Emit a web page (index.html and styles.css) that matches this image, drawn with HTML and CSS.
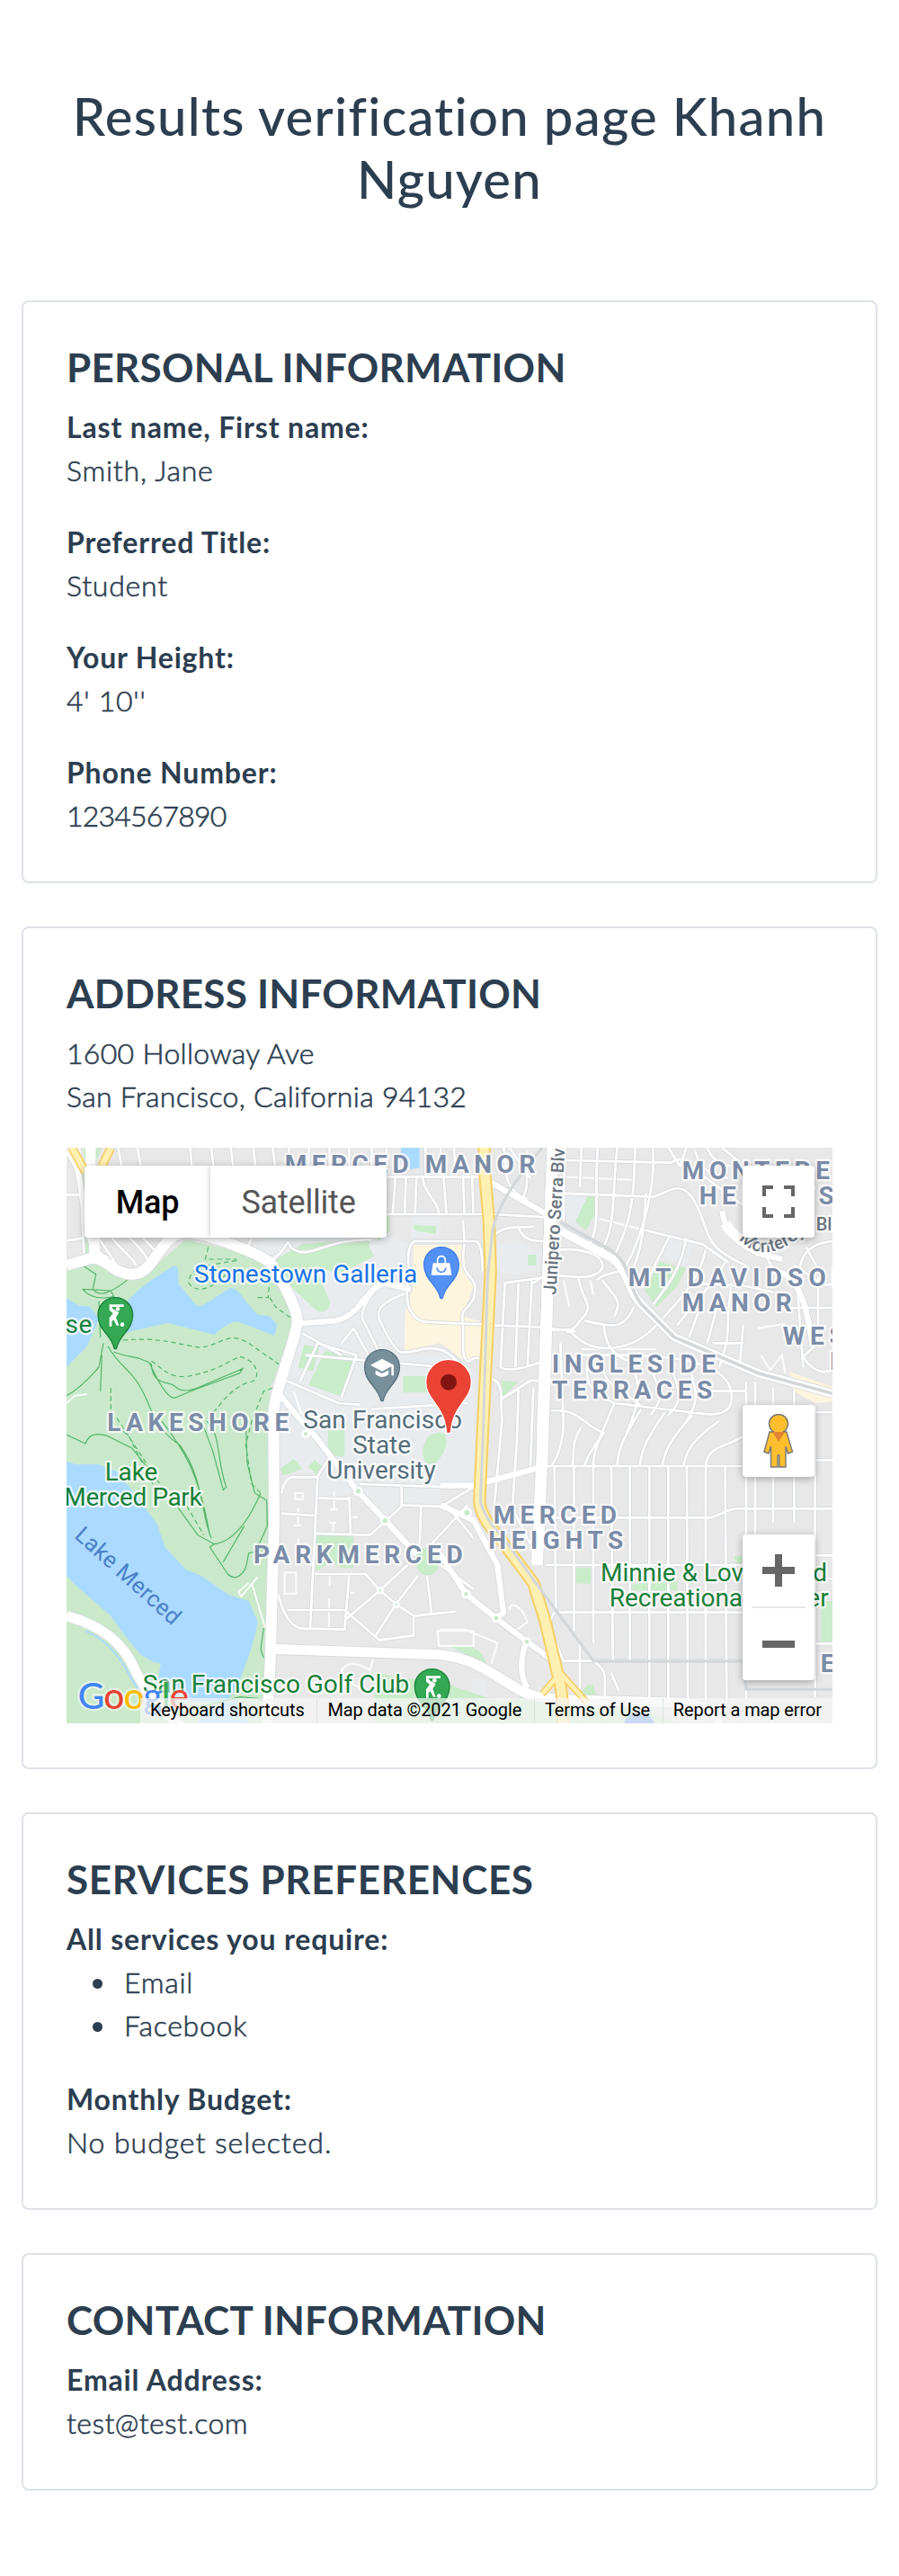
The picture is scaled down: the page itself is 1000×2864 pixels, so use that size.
FILE: index.html
```html
<!DOCTYPE html>
<html lang="en">
<head>
<meta charset="utf-8">
<title>Results verification page</title>
<link rel="stylesheet" href="styles.css">
</head>
<body>
<main class="page">
<h1 class="title">Results verification page Khanh Nguyen</h1>

<section class="card">
  <h2 class="card-title">PERSONAL INFORMATION</h2>
  <dl class="fields">
    <div class="field"><dt>Last name, First name:</dt><dd>Smith, Jane</dd></div>
    <div class="field"><dt>Preferred Title:</dt><dd>Student</dd></div>
    <div class="field"><dt>Your Height:</dt><dd>4' 10''</dd></div>
    <div class="field"><dt>Phone Number:</dt><dd class="digits">1234567890</dd></div>
  </dl>
</section>

<section class="card">
  <h2 class="card-title">ADDRESS INFORMATION</h2>
  <address class="address">1600 Holloway Ave<br>San Francisco, California 94132</address>
  <div class="map">
    <svg class="map-canvas" viewBox="42 48 2556 1920" width="852" height="640">
      <defs>
        <path id="minor" d="M85,48 L100,400 M42,205 H95 M42,358 L95,350 M215,48 L225,108 M278,48 L290,108 M455,48 L460,108 M525,48 L532,108 M590,48 L598,108 M665,48 L672,108 M730,48 L738,108 M150,350 L210,440 M180,330 C220,390 250,400 275,440 M230,330 C280,370 300,400 320,430 M280,330 L340,395 M1110,145 H1420 M1110,270 H1430 M1140,145 L1130,270 M1175,145 L1170,270 M1210,145 L1205,270 M1230,150 C1240,210 1280,220 1285,270 M1300,140 L1310,270 M1335,48 L1340,130 M1365,140 L1370,270 M1395,140 L1400,270 M785,48 V110 M850,48 V110 M920,48 V110 M985,48 V110 M1060,48 V110 M1110,48 V120 M1240,48 V140 M1290,48 V140 M640,390 L660,350 M720,430 C800,370 770,340 790,380 C850,430 900,350 1060,355
        M1365,290 L1370,360 M1200,360 H1410 Q1430,370 1430,460 M1370,370 C1350,480 1400,470 1405,510 C1410,590 1350,570 1365,630 M1200,362 C1170,390 1190,430 1180,510 C1170,580 1200,630 1250,630 L1430,637 M1170,535 C1050,580 1080,610 1110,670 C1150,730 1140,740 1210,725 C1290,700 1330,740 1365,780 M1365,640 V720 Q1370,780 1400,750 L1420,750
        M1460,640 L1600,645 L1740,660 M1460,270 L1650,280 M1500,48 C1520,100 1480,180 1580,220 M1580,60 C1570,140 1590,170 1565,215 M1520,48 L1590,150 M1470,340 C1510,300 1560,320 1600,310 M1550,310 C1560,360 1610,360 1640,360 M1600,500 C1640,470 1640,480 1660,475 M1500,500 L1640,480 M1505,500 L1490,780 Q1520,800 1620,765 M1550,500 L1540,780 M1595,490 L1580,780 M1460,820 C1500,830 1490,860 1495,960 L1470,1240 M1495,885 L1590,825 H1640 M1550,850 L1545,1020 L1530,1250 L1590,1370 M1460,1158 L1620,1110 M1600,850 L1590,1110
        M1700,90 L2060,98 Q2090,75 2110,100 L2300,240 M1690,200 L2000,212 C2060,190 2090,160 2130,215 C2170,270 2170,340 2210,380 C2280,440 2310,430 2320,455 M1705,48 L1700,300 M1760,48 L1755,180 M1815,48 C1800,200 1830,320 1780,380 M1880,48 C1860,200 1880,320 1820,400 M1940,48 L1935,160 C1925,300 1900,340 1870,410 M1998,48 C2010,160 1970,330 1910,440 M1975,200 C1970,320 1960,400 1920,480 M2050,48 L2090,110 L2110,48 M2140,60 C2160,130 2200,140 2250,150 M2180,48 Q2200,100 2260,110 M2230,48 L2280,90 M1980,325 L2165,370 L2250,430 M2055,340 C2030,400 2010,420 1980,500 M2110,350 C2090,460 2040,520 2000,570 M2175,390 C2150,500 2080,560 2030,620 M2240,430 L2210,480 L2080,640 M2260,500 L2250,600 C2250,700 2240,720 2220,780 M2130,500 L2310,510 L2400,530 M2160,570 L2120,680 M2210,590 L2180,700
        M1670,390 C1750,380 1840,400 1830,450 C1800,500 1700,470 1660,475 M1750,480 C1760,560 1810,570 1760,620 C1740,650 1700,680 1720,655 L1660,655 M1720,655 C1780,740 1920,740 2010,640 M1770,625 C1880,650 1900,650 1935,580 M1830,490 C1870,550 1900,550 1870,610 M1835,640 C1840,700 1860,740 1920,760 M1890,460 Q1830,470 1810,490 M1690,700 L1700,960 M1750,740 L1900,740 C2050,740 2240,760 2260,860 C2270,920 2240,945 2160,935 L1870,900 C1800,870 1770,840 1780,770 M1830,760 C1830,850 1900,850 1960,910 M1920,760 C1960,830 1960,890 1910,1000 M1990,770 C2010,850 2050,870 1990,940 M2060,770 C2080,860 2110,880 2050,940 M2120,780 C2150,870 2150,900 2110,960 M1660,925 C1760,920 1760,970 1835,1000 C1790,1060 1780,1080 1770,1110 M1700,960 Q1700,1050 1660,1110 M1760,980 C1720,1040 1740,1080 1730,1110 M1870,900 C1830,1000 1800,1050 1800,1110 M1960,920 C1910,1000 1880,1050 1880,1110 M2040,930 C1990,1000 1960,1050 1955,1110 M2130,940 C2060,1020 2040,1050 2030,1110 M2220,960 C2130,1020 2110,1060 2100,1110 M2300,1010 C2240,1050 2180,1040 2175,1110
        M2300,640 L2290,760 M2310,830 V1700 M2180,860 H2310 M2200,700 H2300 M2340,830 V1700 M2400,850 V1300 M2470,860 V1300 M2540,910 V1880 M2480,500 L2500,780 M2550,480 V640 M2440,582 H2598 M2410,480 C2400,440 2380,430 2370,390 M2598,360 C2500,370 2490,420 2480,500 M2470,440 C2540,480 2560,520 2598,500 M2510,380 L2560,470 M2500,745 L2560,690 M2500,745 Q2540,810 2598,790 M2540,930 H2598
        M1645,1110 H2310 M1640,1282 H2190 C2240,1270 2240,1250 2300,1252 H2598 M1640,1440 H2310 M1680,1598 H2310 M1700,1760 H2310 M1670,1110 L1675,1590 M1735,1110 V1660 M1800,1110 V1700 M1860,1110 L1865,1760 M1922,1110 V1760 M1987,1110 V1910 M2050,1110 V1910 M2112,1110 L2115,1910 M2175,1110 V1910 M2240,1110 L2245,1910 M2545,1090 H2598 M2540,1408 H2598 M2540,1485 H2598 M2540,1702 H2598 M1670,1598 C1640,1640 1670,1680 1700,1760 M1755,1700 V1960 M1800,1760 C1860,1800 1830,1820 1840,1960 M1860,1800 L1885,1860 M2310,1800 V1960
        M760,1200 Q770,1145 800,1147 L878,1147 L920,1080 M880,1147 L855,1650 M885,1217 L990,1220 M985,1210 L990,1335 M875,1335 L1055,1340 L1160,1245 M760,1268 L870,1275 M1020,1170 L1330,1180 M1160,1175 V1240 L1310,1245 M1225,1245 L1220,1370 M1310,1240 L1400,1350 M1400,1180 L1300,1240 M1380,1240 L1260,1370 M750,1540 C770,1640 820,1655 840,1652 L970,1655 L985,1475 M870,1470 H1040 L1088,1525 L1142,1570 L1200,1610 L1340,1595 M780,1590 H970 L1085,1690 L1200,1675 V1615 M975,1620 L1088,1525 L1180,1440 M1070,1680 L1142,1570 L1215,1475 M1245,1475 L1260,1600 M1290,1440 L1400,1520 M830,668 L960,740 M840,740 L1300,780 M775,825 L950,900 L1020,905 M820,830 L880,700 L1010,740 L960,880 M1020,560 L1100,500 L1180,520 M1090,500 Q1020,580 1030,620 L1120,800 M960,700 L1000,650 L1060,760 M1060,920 L1380,900"/>
        <path id="main" d="M42,60 C100,120 80,180 110,300 Q120,400 180,420 M1655,48 L1620,1000 M745,860 C820,960 860,990 910,1060 L1015,1195 L1105,1290 L1210,1405 M1450,160 L1680,290 M1290,1405 L1375,1537 L1475,1617 L1578,1695 L1660,1755 M1290,1175 L1400,1175 L1620,1115 M2230,260 C2240,340 2290,370 2350,400 L2430,420 M2410,460 C2480,470 2510,560 2530,700 M1290,1240 L1400,1290 L1480,1440 L1500,1600 L1475,1617 M1578,1695 C1550,1760 1560,1820 1580,1850 M812,635 L940,625 C1020,610 1040,520 1100,500 L1190,520"/>
        <path id="major" d="M42,440 L120,418 C180,410 190,470 262,470 C340,470 350,335 440,330 C520,335 680,400 720,430 C750,470 812,580 812,625 C812,680 735,860 733,930 L735,1300 L722,1760 L712,1968"/>
        <path id="south" d="M722,1720 L1250,1738 C1400,1740 1450,1800 1560,1860 Q1610,1885 1720,1890 L2100,1900 Q2200,1910 2220,1968 M42,1610 C150,1640 230,1690 275,1800 C330,1900 390,1960 460,2000"/>
        <path id="serra" d="M1665,48 L1648,500 L1630,1060 L1612,1440"/>
        <path id="diag" d="M1680,320 L1850,410 C1920,450 1910,520 1960,570 L2070,680 L2350,800 L2598,868"/>
        <path id="freeway" d="M1436,48 V110 L1452,300 L1457,460 L1430,1010 L1420,1230 Q1425,1280 1480,1340 L1600,1500 L1640,1630 L1680,1800 Q1700,1860 1698,1968"/>
        <path id="ramps" d="M1690,1800 L1630,1870 M1690,1800 L1780,1900"/>
        <path id="monterey" d="M2286,352 Q2372,455 2520,320"/>
        <path id="pin" d="M-4,111 C-12,66 -58,52 -58,0 A58,58 0 1 1 58,0 C58,52 12,66 4,111 Q0,115 -4,111Z"/>
        <g id="golfer" fill="#fff"><path d="M-20,-35 H28 V-27 H-12 L-8,-20 L12,-8 L2,8 L12,35 H4 L-6,16 L-12,22 V38 H-20 V10 L-8,-6 L-20,-16Z"/><circle cx="8" cy="-20" r="7"/><circle cx="23" cy="32" r="7"/></g>
      </defs>
      <rect x="42" y="48" width="2556" height="1920" fill="#e8e8e8"/>
      <path fill="#e8ecef" d="M830,640 L720,430 L640,390 L700,350 L1060,330 L1200,370 L1180,560 L1170,740 L1320,740 L1410,800 L1400,1170 L1290,1180 L1290,1245 L1160,1245 L1100,1300 L1000,1200 L880,1215 V1145 L750,1110 V860Z M1480,370 L1540,360 L1620,400 V450 L1540,470 L1475,460Z M1705,205 H1780 L1800,260 L1740,310 L1705,280Z M2050,345 L2135,365 L2110,440 L2035,415Z M1195,280 H1290 V345 H1195Z M1395,1820 H1445 V1880 H1395Z"/>
      <path fill="#fdf5de" d="M1200,372 H1368 L1380,480 L1400,510 L1362,610 L1430,630 L1420,745 L1370,760 L1290,700 L1170,725 L1172,600 L1198,520Z M2455,795 L2598,845 V895 L2540,900 L2470,860Z"/>
      <path fill="#c9e9ca" d="M42,440 L120,430 L190,460 L262,490 L340,440 L440,355 L640,400 L720,440 L790,590 L800,640 L720,860 L722,1100 L735,1300 L720,1968 H42 V1660Z M100,48 H160 L105,180 L118,420 L98,420Z"/>
      <path fill="#c9ecc9" d="M740,420 L830,370 L1060,350 L1050,375 L1068,410 L950,470 L870,440 L920,560 Q920,600 880,595 L790,510Z M1080,270 H1120 V325 L1080,360Z M1200,305 L1275,310 V335 L1205,325Z M835,705 L885,715 L865,795 L815,780Z M905,725 L1010,750 L965,880 L850,840Z M1165,810 H1250 V865 H1165Z M915,990 H970 V1078 H915Z M755,1120 L800,1085 L830,1120 L765,1140Z M870,1090 L900,1115 L875,1140 L848,1110Z M1230,1060 Q1240,990 1300,1000 Q1330,1040 1270,1105 Q1230,1110 1230,1060Z M875,1340 H1000 V1450 L960,1450 L925,1430 L875,1460Z M1205,1400 Q1250,1360 1285,1410 Q1290,1475 1240,1475 Q1200,1460 1205,1400Z M1780,210 H1805 V270 L1775,325 L1740,295Z M1582,405 H1610 V440 H1582Z M1970,520 L2020,430 L2110,450 L2080,510 L2010,580Z M1493,825 L1550,830 L1495,880Z M1742,1450 H1792 V1502 H1742Z M1930,1505 L2080,1490 V1525 L1930,1525Z M2270,1410 H2310 V1440 H2280Z M2560,1560 H2598 V1695 H2560Z M1330,1715 C1400,1690 1430,1730 1455,1790 L1400,1750Z M1070,1800 L1320,1840 L1500,1900 L1560,1880 L1720,1910 L1780,1840 H1800 L1810,1880 L1900,1890 L2080,1968 H1070Z"/>
      <path fill="#aadaff" d="M240,570 Q270,520 400,442 L415,450 V500 L475,575 H495 L590,515 Q610,515 640,560 L680,605 L720,610 L745,640 L735,675 L620,630 Q590,620 535,672 L380,632 L240,665Z M42,550 L85,575 L120,578 L150,620 L110,710 L42,780Z M42,1095 L75,1105 H150 L205,1125 L260,1190 L345,1305 L370,1380 L440,1455 L490,1475 L585,1540 L650,1560 L680,1630 Q670,1700 610,1850 L575,1900 L400,1890 L345,1830 L357,1768 L335,1765 L290,1740 L240,1680 L190,1610 L140,1565 L80,1515 L42,1475Z M1158,48 H1220 V115 L1190,120 L1158,90Z M480,1968 L500,1920 L610,1890 L650,1968Z"/>
      <path fill="none" stroke="#aadaff" stroke-width="6" d="M105,1660 Q180,1690 230,1770 T300,1900"/>
      <g fill="none" stroke="#53b46b" stroke-width="3.5">
        <path d="M165,700 L150,780 Q90,850 42,875 M180,710 C220,780 260,790 290,850 C330,920 330,980 420,1040 C500,1150 490,1270 525,1350 M360,960 C420,1040 480,1110 520,1340 M200,730 C250,750 280,740 325,770 C330,850 390,820 410,850 Q440,870 500,840 L630,785 L620,800 L470,855 L410,880 Q380,900 320,768 M42,1005 L105,1035 Q120,990 180,1010 L260,1050 L340,1150 M510,960 C560,1010 540,1080 575,1180 L565,1190 L530,1060 L500,980 M640,960 L645,1100 L670,1200 L710,1225 L712,1310 L680,1380 L700,1390 L650,1400 L640,1450 Q610,1500 580,1470 L520,1380 L535,1370 Q620,1360 690,1200 M635,1310 L565,1430 M415,1250 L480,1340 L535,1370 M95,440 L140,470 L130,520 Q160,560 250,485 M95,520 Q130,560 200,545 L190,525 L95,520 M155,680 L150,560 M160,740 L155,860 M700,1650 L690,1720 L700,1750 M460,1920 L620,1880 L680,1885 L720,1900"/>
        <path stroke-dasharray="16 11" d="M230,690 C360,680 390,700 490,715 C570,700 580,660 650,700 L750,770 M325,760 C360,780 380,820 450,810 C550,790 560,770 620,745 C690,760 690,830 650,830 C590,850 560,900 520,945 M515,380 L505,420 L610,420 M610,425 C500,440 450,450 450,500 Q480,540 540,500 L600,450 M680,548 H715 L720,490 M720,548 L740,580 L790,615 M190,850 V960 L250,1010 L340,1190 M210,950 L360,1180 M430,1220 L500,1340 M730,850 L700,860 L660,960 L640,1040 L660,1170 L690,1200"/>
      </g>
      <path fill="none" stroke="#fff" stroke-width="6" opacity=".85" d="M780,700 L820,680 M42,900 L70,875 L110,870 M760,870 L800,940 M800,860 L830,950 M650,1500 L615,1530 L625,1545 L680,1480 M660,1500 L705,1650 M805,1200 H830 V1220 H805Z M815,1250 V1305 M800,1308 H825 M935,1195 V1255 M920,1255 H945 M932,1300 V1330 M918,1298 H942 M995,1280 H1015 M815,1350 V1400 M770,1465 H808 V1535 H770Z M920,1475 V1510 M918,1550 V1650 M985,1532 H1003 M1065,1755 L1055,1790 Q990,1750 960,1790 Q970,1840 1060,1860 M1280,1660 H1400 V1710 H1285Z M1520,1590 C1520,1560 1560,1570 1580,1630 L1540,1660 M1290,1655 H1370 L1480,1700 L1460,1770 M1690,145 L1930,155 M1820,285 L1980,325 M2350,650 L2440,635 M2360,740 L2390,790 L2430,740 L2440,800 M1760,720 H2010 M1700,490 L1720,580 M1790,490 L1800,540"/>
      <g class="casing"><use href="#minor" stroke-width="13"/><use href="#main" stroke-width="24"/><use href="#major" stroke-width="41"/><use href="#south" stroke-width="38"/><use href="#serra" stroke-width="44"/><use href="#diag" stroke-width="32"/></g>
      <g class="road"><use href="#minor" stroke-width="8"/><use href="#main" stroke-width="19"/><use href="#major" stroke-width="36"/><use href="#south" stroke-width="33"/><use href="#serra" stroke-width="39"/><use href="#diag" stroke-width="27"/></g>
      <path fill="none" stroke="#fff" stroke-width="34" d="M122,48 V110 M135,340 V420 M2240,300 Q2260,340 2320,370"/>
      <g class="highway-edge"><use href="#freeway" stroke-width="43"/><use href="#ramps" stroke-width="24"/><path stroke-width="30" d="M60,48 L105,130 M190,48 L160,110"/></g>
      <g class="highway"><use href="#freeway" stroke-width="31"/><use href="#ramps" stroke-width="14"/><path stroke-width="20" d="M60,48 L105,130 M190,48 L160,110"/></g>
      <g class="rail"><path d="M1630,48 Q1480,220 1463,330 L1447,480 L1432,1010 L1423,1230 Q1440,1290 1500,1350 L1630,1530 L1800,1760 H2300 L2310,1855 H2598"/><path stroke-width="11" d="M1690,295 L1850,385 C1930,430 1910,510 1960,570 L2070,680 L2350,800 L2598,868"/></g>
      <g fill="#c9e9ca" stroke="#fff" stroke-width="8"><circle cx="840" cy="1003" r="10"/><circle cx="1015" cy="1194" r="12"/><circle cx="1105" cy="1292" r="12"/><circle cx="1375" cy="1537" r="11"/><circle cx="1476" cy="1617" r="11"/><circle cx="1578" cy="1696" r="11"/><circle cx="1378" cy="1265" r="13"/><circle cx="1088" cy="1525" r="8"/><circle cx="1142" cy="1572" r="8"/></g>
      <circle cx="1953" cy="1985" r="54" fill="#5491f5"/>

      <g class="area">
        <text x="770" y="131" textLength="848">MERCED MANOR</text>
        <text x="2096" y="152" textLength="574">MONTEREY</text><text x="2153" y="236" textLength="462">HEIGHTS</text>
        <text x="1916" y="509" textLength="750">MT DAVIDSON</text><text x="2096" y="593" textLength="378">MANOR</text>
        <text x="2432" y="704" textLength="380">WESTW</text><text x="2590" y="788">H</text>
        <text x="1662" y="799" textLength="558">INGLESIDE</text><text x="1662" y="884" textLength="547">TERRACES</text>
        <text x="178" y="992" textLength="618">LAKESHORE</text>
        <text x="666" y="1435" textLength="710">PARKMERCED</text>
        <text x="1466" y="1301" textLength="424">MERCED</text><text x="1450" y="1385" textLength="462">HEIGHTS</text>
        <text x="2484" y="1798" textLength="210">GEN</text>
      </g>
      <g class="place">
        <text x="468" y="497" fill="#1a73e8" textLength="745">Stonestown Galleria</text>
        <g fill="#546e7a"><text x="832" y="983" textLength="530">San Francisco</text><text x="997" y="1067" textLength="194">State</text><text x="910" y="1151" textLength="364">University</text></g>
        <g fill="#188038"><text x="-10" y="665" textLength="137">use</text><text x="170" y="1157" textLength="176">Lake</text><text x="34" y="1241" textLength="460">Merced Park</text><text x="296" y="1865" textLength="890">San Francisco Golf Club</text><text x="1824" y="1493" textLength="756">Minnie &amp; Lovie Ward</text><text x="1853" y="1577" textLength="732">Recreational Center</text></g>
        <text class="water" transform="translate(65 1346) rotate(42)" textLength="444">Lake Merced</text>
        <g class="street"><text transform="translate(1675 540) rotate(-86.5)" textLength="524">Junipero Serra Blvd</text><text><textPath href="#monterey">Monterey</textPath></text><text x="2543" y="324">Blvd</text></g>
      </g>
      <g transform="translate(205 606)"><use href="#pin" fill="#34a853" stroke="#188038" stroke-width="4"/><use href="#golfer"/></g>
      <g transform="translate(1262 1845)"><use href="#pin" fill="#34a853" stroke="#188038" stroke-width="4"/><use href="#golfer"/></g>
      <g transform="translate(1293 438)"><use href="#pin" fill="#5491f5" stroke="#3b78e7" stroke-width="4"/><path fill="#fff" d="M-28,-5 H28 L34,35 H-34Z"/><path fill="none" stroke="#fff" stroke-width="5" d="M-13,0 V-13 Q-13,-28 0,-28 Q13,-28 13,-13 V0"/><path fill="none" stroke="#5491f5" stroke-width="5" d="M-15,10 Q-13,25 0,25 Q13,25 15,10"/></g>
      <g transform="translate(1095 780)"><use href="#pin" fill="#78909c" stroke="#546e7a" stroke-width="4"/><path fill="#fff" d="M0,-28 L39,-7 V28 H31 V-2 L0,14 L-39,-7Z M-22,10 L0,21 L22,10 V24 Q0,42 -22,24Z"/></g>
      <path fill="#ea4335" stroke="#fff" stroke-width="4" d="M1310,1000 C1304,905 1241,890 1241,830 A76,76 0 1 1 1393,830 C1393,890 1330,905 1324,1000Z"/>
      <circle cx="1317" cy="830" r="27" fill="#811411"/>
      <text class="logo" x="80" y="1920" textLength="370"><tspan fill="#4285f4">G</tspan><tspan fill="#ea4335">o</tspan><tspan fill="#fbbc04">o</tspan><tspan fill="#4285f4">g</tspan><tspan fill="#34a853">l</tspan><tspan fill="#ea4335">e</tspan></text>
    </svg>
    <div class="map-types"><button class="type active">Map</button><button class="type">Satellite</button></div>
    <button class="control fullscreen" aria-label="Toggle fullscreen"><svg width="36" height="36" fill="none" stroke="#666" stroke-width="4"><path d="M2,12 V2 H12 M24,2 H34 V12 M34,24 V34 H24 M12,34 H2 V24"/></svg></button>
    <div class="bottom-controls">
      <button class="control" aria-label="Street View"><svg width="36" height="60" viewBox="0 0 36 60"><g fill="#fdbf2d" stroke="#777" stroke-width="1.4"><path d="M8,20 H27 L33.500,42 L28.500,44 L26,36 V59 H18.800 V46 H17 V59 H9.500 V36 L7,44 L2,42Z"/><circle cx="18" cy="11" r="10.500"/></g><path fill="#e28434" d="M11,20 H25 L18,31Z"/></svg></button>
      <div class="zoom"><button aria-label="Zoom in"><svg width="36" height="36" fill="#666"><path d="M14,0 H22 V14 H36 V22 H22 V36 H14 V22 H0 V14 H14Z"/></svg></button><i class="divider"></i><button aria-label="Zoom out"><svg width="36" height="36" fill="#666"><path d="M0,14 H36 V22 H0Z"/></svg></button></div>
    </div>
    <div class="legal"><span>Keyboard shortcuts</span><span>Map data ©2021 Google</span><span>Terms of Use</span><span>Report a map error</span></div>
  </div>
</section>

<section class="card">
  <h2 class="card-title wide">SERVICES PREFERENCES</h2>
  <dl class="fields">
    <div class="field"><dt>All services you require:</dt><dd><ul class="services"><li>Email</li><li>Facebook</li></ul></dd></div>
    <div class="field"><dt>Monthly Budget:</dt><dd class="loose">No budget selected.</dd></div>
  </dl>
</section>

<section class="card">
  <h2 class="card-title">CONTACT INFORMATION</h2>
  <dl class="fields"><div class="field"><dt>Email Address:</dt><dd class="email">test@test.com</dd></div></dl>
</section>
</main>
</body>
</html>
```
FILE: styles.css
```css
* { box-sizing: border-box; }
body { margin: 0; background: #fff; color: #2c3e50; font: 300 32px/48px Lato, sans-serif; }
.page { padding: 94px 24px 96px; display: flex; flex-direction: column; gap: 48px; }
.title { margin: 0 0 52px; font-size: 58px; line-height: 70px; font-weight: 500; letter-spacing: 1.25px; text-align: center; }
.card { border: 2px solid #dee2e6; border-radius: 8px; padding: 46px 48px 49px; }
.card-title { margin: 0 0 17px; font-size: 44px; line-height: 52px; font-weight: 700; letter-spacing: .25px; }
.card-title.wide { letter-spacing: .65px; }
.fields { margin: 0; display: flex; flex-direction: column; gap: 32px; }
dt { font-weight: 700; letter-spacing: .83px; }
dd { margin: 0; letter-spacing: .75px; -webkit-text-stroke: .6px; }
.digits { letter-spacing: -.8px; }
.loose { letter-spacing: .95px; }
.email { letter-spacing: .4px; }
.services { margin: 0 0 2px; padding-left: 64px; list-style: none; }
.services li { display: flex; align-items: center; }
.services li::before { content: ""; width: 11px; height: 11px; margin: 3px 24px 0 -35px; border-radius: 50%; background: currentColor; }
.address { font-style: normal; letter-spacing: .3px; margin-bottom: 33px; -webkit-text-stroke: .6px; }

.map { position: relative; height: 640px; overflow: hidden; font-family: Roboto, sans-serif; letter-spacing: 0; }
.map-canvas { display: block; }
.casing, .road, .highway, .highway-edge, .rail { fill: none; stroke-linejoin: round; }
.casing { stroke: #d6d9dd; }
.road { stroke: #fff; }
.highway-edge { stroke: #f6cf65; }
.highway { stroke: #fef0b2; }
.rail { stroke: #d3d7da; stroke-width: 9; }
.area, .place { font-size: 84px; paint-order: stroke; stroke: rgba(255,255,255,.75); stroke-width: 14; stroke-linejoin: round; }
.area { font-weight: 700; fill: #7b8ca8; letter-spacing: 12px; }
.place { font-weight: 400; }
.water { fill: #4b80c9; stroke: none; font-size: 76px; }
.street { font-size: 60px; fill: #6b7580; font-weight: 500; }
.logo { font: 500 122px Lato, sans-serif; paint-order: stroke; stroke: rgba(255,255,255,.5); stroke-width: 14; }

.map button { border: 0; padding: 0; background: #fff; display: flex; align-items: center; justify-content: center; font-family: inherit; }
.map-types { position: absolute; left: 20px; top: 20px; display: flex; height: 80px; border-radius: 4px; box-shadow: 0 2px 8px rgba(0,0,0,.3); overflow: hidden; }
.map .type { width: 196px; padding-top: 2px; font-size: 36px; font-weight: 400; letter-spacing: -.2px; color: #565656; box-shadow: 0 0 6px rgba(0,0,0,.25); }
.map .type.active { width: 140px; font-weight: 500; color: #000; }
.control, .zoom { width: 80px; border-radius: 4px; box-shadow: 0 2px 8px rgba(0,0,0,.3); }
.control { height: 80px; }
.fullscreen { position: absolute; right: 20px; top: 20px; }
.bottom-controls { position: absolute; right: 20px; bottom: 48px; display: flex; flex-direction: column; gap: 64px; }
.zoom { height: 162px; background: #fff; display: flex; flex-direction: column; align-items: center; overflow: hidden; }
.zoom button { width: 80px; height: 80px; }
.divider { width: 60px; height: 2px; background: #e6e6e6; }
.legal { position: absolute; right: 0; bottom: 0; width: 770px; height: 28px; display: flex; justify-content: space-between; background: rgba(245,245,245,.72); color: #000; font: 400 20px/27px Roboto, sans-serif; letter-spacing: -.1px; }
.legal span { padding: 0 12px 0 11px; white-space: nowrap; }
.legal span + span { border-left: 1px solid rgba(200,215,200,.5); }
```
